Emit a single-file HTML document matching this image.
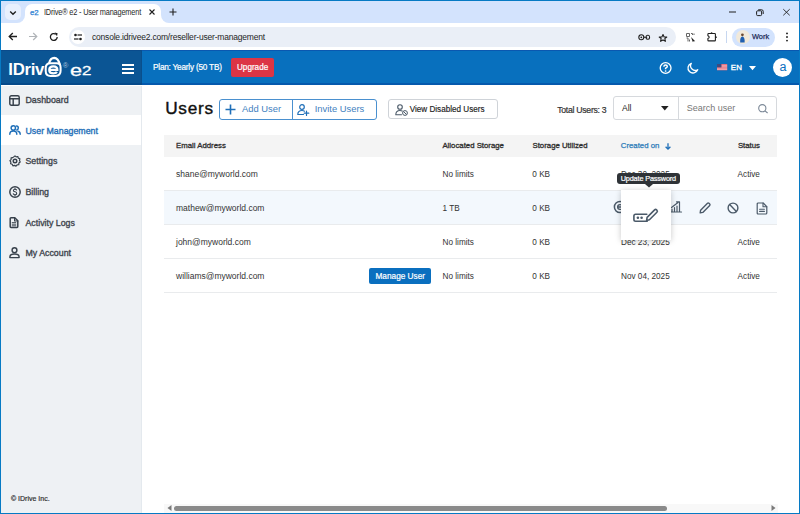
<!DOCTYPE html>
<html><head><meta charset="utf-8">
<style>
*{box-sizing:border-box;margin:0;padding:0}
html,body{width:800px;height:514px;overflow:hidden;background:#fff;font-family:"Liberation Sans",sans-serif}
.a{position:absolute;white-space:nowrap;line-height:1}
svg.a{overflow:visible}
#win{position:absolute;left:0;top:0;width:800px;height:514px;overflow:hidden;background:#fff}
#bd{position:absolute;left:0;top:0;width:800px;height:514px;border:1px solid #067ac4;pointer-events:none;z-index:50}
.nt{font-size:8.8px;color:#3f464e;-webkit-text-stroke:0.35px #3f464e}
.th{font-size:7.8px;color:#2e2e2e;-webkit-text-stroke:0.3px #2e2e2e}
.td{font-size:8.2px;color:#333}
.em{font-size:8.5px;color:#333}
.ic{stroke:#4b5a69;fill:none;stroke-width:1.4;stroke-linecap:round;stroke-linejoin:round}
.si{stroke:#37414b;fill:none;stroke-width:1.45;stroke-linecap:round;stroke-linejoin:round}
</style></head><body>
<div id="win">
 <!-- tab strip -->
 <div class="a" style="left:0;top:0;width:800px;height:23.3px;background:#d3e3fd"></div>
 <div class="a" style="left:25px;top:4px;width:136px;height:19px;background:#fff;border-radius:7px 7px 0 0"></div>
 <div class="a" style="left:161px;top:15px;width:8px;height:8px;background:#fff"></div>
 <div class="a" style="left:161px;top:11px;width:12px;height:12px;background:#d3e3fd;border-radius:0 0 0 8px"></div>
 <div class="a" style="left:17px;top:15px;width:8px;height:8px;background:#fff"></div>
 <div class="a" style="left:13px;top:11px;width:12px;height:12px;background:#d3e3fd;border-radius:0 0 8px 0"></div>
 <div class="a" style="left:5px;top:4px;width:16px;height:16px;border-radius:5px;background:#e9f0fd"></div>
 <svg class="a" style="left:9px;top:9.5px" width="8" height="6" viewBox="0 0 8 6"><path d="M1.2 1.5 L4 4.2 L6.8 1.5" stroke="#1f1f1f" stroke-width="1.4" fill="none"/></svg>
 <div class="a" style="left:30px;top:9.3px;font-size:7.8px;color:#2a7ed2;letter-spacing:-0.2px;-webkit-text-stroke:0.25px #2a7ed2">e2</div>
 <div class="a" style="left:43.5px;top:7.9px;font-size:8.6px;color:#1f1f1f;letter-spacing:-0.2px;transform:scaleX(0.855);transform-origin:0 0">IDrive<span style="font-size:8.6px">®</span>&nbsp;e2 - User management</div>
 <svg class="a" style="left:148.5px;top:9px" width="6" height="6" viewBox="0 0 6 6"><path d="M0.5 0.5L5.5 5.5M5.5 0.5L0.5 5.5" stroke="#1f1f1f" stroke-width="1.1"/></svg>
 <svg class="a" style="left:169px;top:8px" width="8" height="8" viewBox="0 0 8 8"><path d="M4 0.5V7.5M0.5 4H7.5" stroke="#1f1f1f" stroke-width="1.1"/></svg>
 <svg class="a" style="left:729px;top:11px" width="7" height="2" viewBox="0 0 7 2"><path d="M0 1H7" stroke="#1f1f1f" stroke-width="1"/></svg>
 <svg class="a" style="left:755.5px;top:8.5px" width="8" height="7" viewBox="0 0 8 7"><rect x="0.6" y="1.8" width="5" height="4.8" rx="1" stroke="#1f1f1f" stroke-width="1" fill="none"/><path d="M2.2 0.8H5.6Q7.2 0.8 7.2 2.4V5" stroke="#1f1f1f" stroke-width="1" fill="none"/></svg>
 <svg class="a" style="left:783px;top:9px" width="7" height="6.5" viewBox="0 0 7 6.5"><path d="M0.3 0.2L6.7 6.3M6.7 0.2L0.3 6.3" stroke="#1f1f1f" stroke-width="0.9"/></svg>

 <!-- toolbar -->
 <svg class="a" style="left:8px;top:32px" width="10" height="9" viewBox="0 0 10 9"><path d="M9 4.5H1.5M4.8 1L1.2 4.5L4.8 8" stroke="#1f1f1f" stroke-width="1.3" fill="none"/></svg>
 <svg class="a" style="left:28px;top:32px" width="10" height="9" viewBox="0 0 10 9"><path d="M1 4.5H8.5M5.2 1L8.8 4.5L5.2 8" stroke="#b0b4b8" stroke-width="1.2" fill="none"/></svg>
 <svg class="a" style="left:49px;top:32px" width="10" height="10" viewBox="0 0 10 10"><path d="M8.2 5A3.4 3.4 0 1 1 6.8 2.2" stroke="#1f1f1f" stroke-width="1.3" fill="none"/><path d="M5.6 0.6L8.6 1.2L8 4.2Z" fill="#1f1f1f"/></svg>
 <div class="a" style="left:69px;top:27.3px;width:607px;height:19.6px;background:#eaeff7;border-radius:10px"></div>
 <div class="a" style="left:71px;top:30px;width:14px;height:14px;background:#fff;border-radius:7px"></div>
 <svg class="a" style="left:73px;top:32px" width="10" height="10" viewBox="0 0 10 10"><circle cx="2.5" cy="3" r="1.3" fill="#1f1f1f"/><path d="M4.5 3H9" stroke="#1f1f1f" stroke-width="1.2"/><circle cx="7.5" cy="7" r="1.3" fill="#1f1f1f"/><path d="M1 7H5.5" stroke="#1f1f1f" stroke-width="1.2"/></svg>
 <div class="a" style="left:92px;top:32.8px;font-size:8.5px;color:#1f1f1f;letter-spacing:-0.2px">console.idrivee2.com/reseller-user-management</div>
 <svg class="a" style="left:638px;top:34px" width="13" height="7" viewBox="0 0 13 7"><circle cx="3.3" cy="3.3" r="2.5" stroke="#1f1f1f" stroke-width="1.1" fill="none"/><circle cx="3.3" cy="3.3" r="0.9" fill="#1f1f1f"/><path d="M5.8 3.3H9.2M9.5 1.3H10.2Q11.6 1.3 11.6 3.3Q11.6 5.3 10.2 5.3H9.5Q8 5.3 8 3.3Q8 1.3 9.5 1.3Z" stroke="#1f1f1f" stroke-width="1.1" fill="none"/></svg>
 <svg class="a" style="left:657.5px;top:33.5px" width="10" height="8" viewBox="0 0 10 8"><path d="M5 0.6L6.1 2.9L8.8 3L6.8 4.7L7.5 7.3L5 5.9L2.5 7.3L3.2 4.7L1.2 3L3.9 2.9Z" stroke="#1f1f1f" stroke-width="1.1" fill="none" stroke-linejoin="round"/></svg>
 <svg class="a" style="left:686px;top:32.5px" width="10" height="9" viewBox="0 0 10 9"><path d="M0.5 0.5H3.5V3.5H0.5Z M5 0.5H6.5V2 M8 0.5V2 M0.5 5H2V8.5 M3.5 6.5V8.5" stroke="#666" stroke-width="1" fill="none"/><path d="M5 4L9.2 8.2L7.6 8.3L6.8 9Z" fill="#1f1f1f"/></svg>
 <svg class="a" style="left:706.5px;top:32px" width="11" height="10" viewBox="0 0 11 10"><path d="M1.6 1.5H7.7Q8.4 1.5 8.4 2.2V8.2Q8.4 8.9 7.7 8.9H1.6Q0.9 8.9 0.9 8.2V6.6Q2.2 6.1 2.2 5.2Q2.2 4.3 0.9 3.8V2.2Q0.9 1.5 1.6 1.5Z" stroke="#1f1f1f" stroke-width="1.1" fill="none" stroke-linejoin="round"/><circle cx="4.6" cy="1.1" r="0.9" fill="#1f1f1f"/><circle cx="8.9" cy="5.2" r="0.9" fill="#1f1f1f"/></svg>
 <div class="a" style="left:726px;top:31px;width:1px;height:12px;background:#c7d7f0"></div>
 <div class="a" style="left:732px;top:27.5px;width:43px;height:19px;background:#d3e3fd;border-radius:10px"></div>
 <div class="a" style="left:735.5px;top:30px;width:14px;height:14px;background:#f1e9da;border-radius:7px"></div>
 <svg class="a" style="left:739px;top:33px" width="7" height="10" viewBox="0 0 7 10"><circle cx="3.4" cy="1.8" r="1.4" fill="#6b4a33"/><path d="M1.2 9.5Q0.8 4.2 3.4 3.6Q6 4.2 5.6 9.5Z" fill="#1f5fb0"/></svg>
 <div class="a" style="left:752px;top:33.2px;font-size:7.4px;color:#1f2d5a;-webkit-text-stroke:0.25px #1f2d5a">Work</div>
 <svg class="a" style="left:785px;top:32px" width="4" height="10" viewBox="0 0 4 10"><circle cx="2" cy="1.4" r="0.95" fill="#1f1f1f"/><circle cx="2" cy="5" r="0.95" fill="#1f1f1f"/><circle cx="2" cy="8.6" r="0.95" fill="#1f1f1f"/></svg>

 <!-- header -->
 <div class="a" style="left:0;top:50px;width:800px;height:34.6px;background:#0870be"></div>
 <div class="a" style="left:0;top:50px;width:142px;height:34.6px;background:#0b5594"></div>
 <div class="a" style="left:0;top:50px;width:800px;height:1px;background:#0a58b0"></div>
 <div class="a" style="left:0;top:50px;width:142px;height:1px;background:#0a4b8c"></div>
 <div class="a" style="left:141px;top:50px;width:1px;height:34px;background:#0a4f8c"></div>
 <div class="a" style="left:0;top:83.4px;width:800px;height:1.3px;background:#0559ad"></div>
 <div class="a" style="left:0;top:83.4px;width:142px;height:1.3px;background:#064a8a"></div>
 <div class="a" style="left:8.3px;top:62.2px;font-size:16.8px;font-weight:bold;color:#fff;letter-spacing:-0.3px">IDriv</div>
 <svg class="a" style="left:44px;top:56px" width="18" height="21" viewBox="0 0 18 21"><path d="M5 7.4Q6.4 1.9 10.2 1.9Q14.2 2.1 15.9 8.6" stroke="#fff" stroke-width="2.1" fill="none" stroke-linecap="round"/><path d="M6.5 7.3H12.6Q16.6 7.3 16.6 11.5V14.8Q16.6 19.9 11.6 19.9H6.6Q1.7 19.9 1.7 15V12.2Q1.7 7.3 6.5 7.3Z" stroke="#fff" stroke-width="2" fill="#0b5594"/><path d="M5.3 13.8H13.3Q13.3 10.4 9.3 10.4Q5.3 10.4 5.3 13.9Q5.3 17.3 9.4 17.3Q12 17.3 12.9 15.9" stroke="#fff" stroke-width="2.3" fill="none"/></svg>
 <div class="a" style="left:62.8px;top:62.3px;font-size:7.5px;color:#a9c2dc">®</div>
 <div class="a" style="left:70.4px;top:62.4px;font-size:16.4px;color:#fff;transform:scaleX(1.32);transform-origin:0 0;-webkit-text-stroke:0.3px #fff">e</div>
 <div class="a" style="left:82.2px;top:64.3px;font-size:13px;color:#fff;transform:scaleX(1.3);transform-origin:0 0;-webkit-text-stroke:0.3px #fff">2</div>
 <div class="a" style="left:122px;top:64px;width:12px;height:2px;background:#fff"></div>
 <div class="a" style="left:122px;top:68px;width:12px;height:2px;background:#fff"></div>
 <div class="a" style="left:122px;top:72px;width:12px;height:2px;background:#fff"></div>
 <div class="a" style="left:153px;top:63.7px;font-size:8.2px;color:#fff;letter-spacing:-0.2px;-webkit-text-stroke:0.2px #fff">Plan: Yearly (50 TB)</div>
 <div class="a" style="left:230.5px;top:58px;width:43.5px;height:18.5px;background:#dc3545;border-radius:2px"></div>
 <div class="a" style="left:237px;top:63.7px;font-size:8.15px;color:#fff;-webkit-text-stroke:0.2px #fff">Upgrade</div>
 <svg class="a" style="left:659px;top:62px" width="14" height="14" viewBox="0 0 14 14"><circle cx="6.6" cy="6" r="5.4" stroke="#fff" stroke-width="1.3" fill="none"/><path d="M4.9 4.7Q4.9 3 6.6 3Q8.3 3 8.3 4.5Q8.3 5.5 6.6 6.2V7.2" stroke="#fff" stroke-width="1.5" fill="none"/><circle cx="6.6" cy="9" r="0.85" fill="#fff"/></svg>
 <svg class="a" style="left:686.7px;top:62px" width="13" height="13" viewBox="0 0 13 13"><path d="M4.29 1.3A5 5 0 1 0 10.7 7.71A4.67 4.67 0 0 1 4.29 1.3Z" stroke="#fff" stroke-width="1.3" fill="none" stroke-linejoin="round"/></svg>
 <svg class="a" style="left:716.8px;top:64.3px" width="10.2" height="6.3" viewBox="0 0 10.2 6.3"><rect width="10.2" height="6.3" fill="#e46a78"/><path d="M4.4 1.35H10.2M4.4 2.75H10.2M0 4.15H10.2M0 5.55H10.2" stroke="#f3c9cf" stroke-width="0.6"/><rect width="4.4" height="3.4" fill="#3e4a80"/></svg>
 <div class="a" style="left:730.8px;top:64.2px;font-size:7.9px;color:#fff;-webkit-text-stroke:0.35px #fff;letter-spacing:0.2px">EN</div>
 <svg class="a" style="left:749px;top:65.8px" width="7" height="5" viewBox="0 0 7 5"><path d="M0 0H7L3.5 4.3Z" fill="#fff"/></svg>
 <div class="a" style="left:773px;top:58px;width:19px;height:19px;background:#fff;border-radius:50%"></div>
 <div class="a" style="left:779.5px;top:60.5px;font-size:12.5px;color:#0a6fbf">a</div>

 <!-- sidebar -->
 <div class="a" style="left:0;top:86px;width:142px;height:430px;background:#eef1f4"></div>
 
 <div class="a" style="left:0;top:115px;width:141px;height:30.3px;background:#fff"></div>
 <div class="a" style="left:141px;top:86px;width:1px;height:430px;background:#e4e9ee"></div>
 <svg class="a" style="left:9px;top:94.5px" width="11" height="11" viewBox="0 0 11 11"><rect x="0.8" y="0.8" width="9.4" height="9.4" rx="1.5" class="si"/><path d="M0.8 3.8H10.2M4.2 3.8V10.2" class="si"/></svg>
 <div class="a nt" style="left:25.5px;top:96.2px">Dashboard</div>
 <svg class="a" style="left:9px;top:125.3px" width="12" height="10" viewBox="0 0 12 10"><circle cx="4.3" cy="3" r="2.2" class="si" style="stroke:#1f6fb8"/><path d="M0.8 9.2Q0.8 6 4.3 6Q7.8 6 7.8 9.2" class="si" style="stroke:#1f6fb8"/><path d="M7.4 1Q9.3 1 9.3 3Q9.3 4.6 7.8 5M9 6.3Q11.2 6.8 11.2 9.2" class="si" style="stroke:#1f6fb8"/></svg>
 <div class="a nt" style="left:25.5px;top:127.0px;color:#1f6fb8;-webkit-text-stroke:0.35px #1f6fb8">User Management</div>
 <svg class="a" style="left:9px;top:155px" width="12" height="12" viewBox="0 0 12 12"><path d="M6 0.9L7.2 1.9L8.8 1.5L9.3 3.1L10.9 3.8L10.5 5.4L11.2 6.9L9.9 7.9L9.8 9.6L8.1 9.8L7 11.1L5.5 10.4L3.9 10.8L3.2 9.3L1.6 8.7L1.9 7.1L0.9 5.7L2.1 4.6L2.1 2.9L3.8 2.6Z" class="si" style="stroke-width:1.2"/><circle cx="6" cy="6" r="1.8" class="si"/></svg>
 <div class="a nt" style="left:25.5px;top:157.1px">Settings</div>
 <svg class="a" style="left:9px;top:186px" width="12" height="12" viewBox="0 0 12 12"><circle cx="6" cy="6" r="5.2" class="si"/><path d="M7.6 4Q7.2 3.2 6 3.2Q4.4 3.2 4.4 4.4Q4.4 5.5 6 5.8Q7.7 6.1 7.7 7.4Q7.7 8.7 6 8.7Q4.7 8.7 4.3 7.8M6 2.3V3.2M6 8.7V9.7" class="si" style="stroke-width:1.1"/></svg>
 <div class="a nt" style="left:25.5px;top:187.9px">Billing</div>
 <svg class="a" style="left:9px;top:217px" width="10" height="11" viewBox="0 0 10 11"><path d="M1.2 1.6Q1.2 0.8 2 0.8H5.8L8.8 3.8V9.6Q8.8 10.4 8 10.4H2Q1.2 10.4 1.2 9.6Z" class="si" style="stroke-width:1.5"/><path d="M5.6 0.8V4H8.8" class="si" style="stroke-width:1.2"/><path d="M3.2 5.6H6.8M3.2 7.2H6.8M3.2 8.8H6.8" class="si" style="stroke-width:0.9"/></svg>
 <div class="a nt" style="left:25.5px;top:218.5px">Activity Logs</div>
 <svg class="a" style="left:9px;top:246.5px" width="12" height="12" viewBox="0 0 12 12"><circle cx="5.5" cy="3.2" r="2.4" class="si"/><path d="M0.9 10.6V9.9Q0.9 6.9 5.5 6.9Q10.1 6.9 10.1 9.9V10.6Z" class="si"/></svg>
 <div class="a nt" style="left:25.5px;top:248.8px">My Account</div>
 <div class="a" style="left:11px;top:494.6px;font-size:7px;color:#333;-webkit-text-stroke:0.2px #333">© IDrive Inc.</div>

 <!-- content -->
 <div class="a" style="left:165.2px;top:99.8px;font-size:17.2px;color:#111;letter-spacing:0.75px;-webkit-text-stroke:0.4px #111">Users</div>
 <div class="a" style="left:219px;top:99px;width:158px;height:20.5px;border:1px solid #4a90cf;border-radius:3px"></div>
 <div class="a" style="left:291.5px;top:99px;width:1px;height:20.5px;background:#4a90cf"></div>
 <svg class="a" style="left:225px;top:104px" width="11" height="11" viewBox="0 0 11 11"><path d="M5.5 0.5V10.5M0.5 5.5H10.5" stroke="#1f6fb8" stroke-width="1.6"/></svg>
 <div class="a" style="left:242px;top:103.8px;font-size:9.4px;color:#3f7fc0">Add User</div>
 <svg class="a" style="left:297px;top:104px" width="13" height="12" viewBox="0 0 13 12"><circle cx="5" cy="3" r="2.3" stroke="#1f6fb8" stroke-width="1.2" fill="none"/><path d="M0.8 10.5Q0.8 6.5 5 6.5Q6.5 6.5 7.5 7.2M0.8 10.5H6.5M9.5 7V11.5M7.2 9.2H11.8" stroke="#1f6fb8" stroke-width="1.2" fill="none" stroke-linecap="round"/></svg>
 <div class="a" style="left:314.75px;top:103.8px;font-size:9.4px;color:#3f7fc0">Invite Users</div>

 <div class="a" style="left:388px;top:99px;width:109.5px;height:19.5px;border:1px solid #cfd3d8;border-radius:3px"></div>
 <svg class="a" style="left:394.5px;top:103.5px" width="14" height="12" viewBox="0 0 14 12"><circle cx="5" cy="3" r="2.3" stroke="#4b5a69" stroke-width="1.1" fill="none"/><path d="M0.8 10.8Q0.8 6.5 5 6.5Q6.3 6.5 7.2 7M0.8 10.8H6.5" stroke="#4b5a69" stroke-width="1.1" fill="none" stroke-linecap="round"/><circle cx="10" cy="9" r="2.4" stroke="#4b5a69" stroke-width="1" fill="none"/><path d="M8.5 7.5L11.5 10.5" stroke="#4b5a69" stroke-width="1"/></svg>
 <div class="a" style="left:409.7px;top:105.9px;font-size:8.15px;color:#222;-webkit-text-stroke:0.15px #222">View Disabled Users</div>

 <div class="a" style="left:557.2px;top:106px;font-size:8.7px;color:#333;letter-spacing:-0.28px;-webkit-text-stroke:0.2px #333">Total Users: 3</div>
 <div class="a" style="left:612.5px;top:96px;width:164px;height:23.5px;border:1px solid #d6d9dd;border-radius:3px"></div>
 <div class="a" style="left:677.5px;top:96px;width:1px;height:23.5px;background:#d6d9dd"></div>
 <div class="a" style="left:622px;top:103.6px;font-size:8.5px;color:#222">All</div>
 <svg class="a" style="left:661px;top:106px" width="8" height="5" viewBox="0 0 8 5"><path d="M0 0H7.6L3.8 4.4Z" fill="#222"/></svg>
 <div class="a" style="left:686.7px;top:103.5px;font-size:9px;color:#777">Search user</div>
 <svg class="a" style="left:757.5px;top:103.6px" width="11" height="10" viewBox="0 0 11 10"><circle cx="4.3" cy="4.2" r="3.6" stroke="#7a8796" stroke-width="1.1" fill="none"/><path d="M7 6.8L9.6 9" stroke="#7a8796" stroke-width="1.1"/></svg>

 <div class="a" style="left:164px;top:134.5px;width:613px;height:22px;background:#f4f4f4"></div>
 <div class="a th" style="left:176px;top:141.8px">Email Address</div>
 <div class="a th" style="left:442.4px;top:141.8px">Allocated Storage</div>
 <div class="a th" style="left:532.5px;top:141.8px">Storage Utilized</div>
 <div class="a th" style="left:620.8px;top:141.8px;color:#2a7ab8;-webkit-text-stroke:0.25px #2a7ab8">Created on</div>
 <svg class="a" style="left:664.5px;top:142.5px" width="6" height="7" viewBox="0 0 6 7"><path d="M3 0.3V6.2M0.6 3.8L3 6.2L5.4 3.8" stroke="#1f6fb8" stroke-width="1.3" fill="none"/></svg>
 <div class="a th" style="left:737.9px;top:141.8px">Status</div>

 <div class="a" style="left:164px;top:189.5px;width:613px;height:1px;background:#e9ebed"></div>
 <div class="a" style="left:164px;top:190.5px;width:613px;height:33.5px;background:#f3f8fd"></div>
 <div class="a" style="left:164px;top:224px;width:613px;height:1px;background:#e9ebed"></div>
 <div class="a" style="left:164px;top:258px;width:613px;height:1px;background:#e9ebed"></div>
 <div class="a" style="left:164px;top:292px;width:613px;height:1px;background:#e9ebed"></div>

 <div class="a em" style="left:176px;top:169.9px">shane@myworld.com</div>
 <div class="a td" style="left:442.5px;top:170.9px">No limits</div>
 <div class="a td" style="left:532.3px;top:170.9px">0 KB</div>
 <div class="a td" style="left:621px;top:170.9px">Dec 30, 2025</div>
 <div class="a td" style="left:737.6px;top:170.9px">Active</div>

 <div class="a em" style="left:176px;top:204px">mathew@myworld.com</div>
 <div class="a td" style="left:442.5px;top:205.0px">1 TB</div>
 <div class="a td" style="left:532.3px;top:205.0px">0 KB</div>
 <svg class="a" style="left:613px;top:200px" width="14" height="14" viewBox="0 0 14 14"><circle cx="7" cy="7" r="5.6" class="ic" style="stroke-width:1.5"/><path d="M4.6 7H9.4Q9.4 4.6 7 4.6Q4.6 4.6 4.6 7Q4.6 9.4 7 9.4H9" class="ic" style="stroke-width:1.3"/></svg>
 <svg class="a" style="left:670px;top:200px" width="12" height="13" viewBox="0 0 12 13"><path d="M1 12H11.5M2 11.5V9M4.5 11.5V7.5M7 11.5V6M9.5 11.5V4.5M1.5 7.5L8 2.5M6.5 1.8H9.5V4.5" class="ic" style="stroke-width:1.2"/></svg>
 <svg class="a" style="left:698px;top:202px" width="14" height="13" viewBox="0 0 14 13"><path d="M2.2 10.8L2.6 8.2L9.5 1.3Q10.2 0.6 11 1.3L11.7 2Q12.4 2.8 11.7 3.5L4.8 10.4Z" class="ic"/></svg>
 <svg class="a" style="left:727px;top:201.5px" width="12" height="12" viewBox="0 0 12 12"><circle cx="6" cy="6" r="4.9" class="ic"/><path d="M2.6 2.6L9.4 9.4" class="ic"/></svg>
 <svg class="a" style="left:756px;top:201.5px" width="12" height="13" viewBox="0 0 12 13"><path d="M1.2 2Q1.2 1 2.2 1H7.2L10.8 4.6V11Q10.8 12 9.8 12H2.2Q1.2 12 1.2 11Z" class="ic" style="stroke-width:1.2"/><path d="M7 1V4.8H10.8M3.6 7.2H8.4M3.6 9.4H8.4" class="ic" style="stroke-width:1.1"/></svg>

 <div class="a em" style="left:176px;top:238px">john@myworld.com</div>
 <div class="a td" style="left:442.5px;top:239.0px">No limits</div>
 <div class="a td" style="left:532.3px;top:239.0px">0 KB</div>
 <div class="a td" style="left:621px;top:239.0px">Dec 23, 2025</div>
 <div class="a td" style="left:737.6px;top:239.0px">Active</div>

 <div class="a em" style="left:176px;top:272px">williams@myworld.com</div>
 <div class="a" style="left:369px;top:267.8px;width:62px;height:16px;background:#0a6fbf;border-radius:2px"></div>
 <div class="a" style="left:375.5px;top:272.7px;font-size:8.25px;color:#fff;-webkit-text-stroke:0.2px #fff">Manage User</div>
 <div class="a td" style="left:442.5px;top:273.0px">No limits</div>
 <div class="a td" style="left:532.3px;top:273.0px">0 KB</div>
 <div class="a td" style="left:621px;top:273.0px">Nov 04, 2025</div>
 <div class="a td" style="left:737.6px;top:273.0px">Active</div>

 <!-- popup -->
 <div class="a" style="left:620.7px;top:189.5px;width:50.7px;height:50px;background:#fff;box-shadow:0 1px 6px rgba(0,0,0,0.22)"></div>
 <svg class="a" style="left:632px;top:205px" width="28" height="18" viewBox="0 0 28 18"><path d="M15.2 16.2H3.6Q1.9 16.2 1.9 14.5V10.9Q1.9 9.2 3.6 9.2H14.8" stroke="#4b5a69" stroke-width="1.6" fill="none" stroke-linecap="round"/><circle cx="5.9" cy="12.7" r="1.3" fill="#4b5a69"/><circle cx="9.6" cy="12.7" r="1.3" fill="#4b5a69"/><path d="M14.6 15.6L15.1 12.4L22.6 4.9Q23.6 3.9 24.6 4.9L24.9 5.2Q25.9 6.2 24.9 7.2L17.4 14.7Z" stroke="#4b5a69" stroke-width="1.6" fill="none" stroke-linejoin="round"/></svg>
 <div class="a" style="left:617px;top:172.8px;width:63px;height:11.6px;background:#2f3337;border-radius:3px"></div>
 <svg class="a" style="left:645px;top:184.4px" width="8" height="3.5" viewBox="0 0 8 3.5"><path d="M0 0H8L4 3.5Z" fill="#2f3337"/></svg>
 <div class="a" style="left:620.7px;top:175.3px;font-size:7.3px;color:#fff;letter-spacing:-0.15px;-webkit-text-stroke:0.2px #fff">Update Password</div>

 <!-- scrollbar -->
 <div class="a" style="left:164px;top:503.5px;width:614px;height:9px;background:#f8f8f8"></div>
 <svg class="a" style="left:166.5px;top:505px" width="5" height="6" viewBox="0 0 5 6"><path d="M4.5 0V6L0.5 3Z" fill="#7a7a7a"/></svg>
 <div class="a" style="left:174.4px;top:505.6px;width:492.2px;height:5px;background:#8a8a8a;border-radius:3px"></div>
 <svg class="a" style="left:770.5px;top:505px" width="5" height="6" viewBox="0 0 5 6"><path d="M0.5 0V6L4.5 3Z" fill="#7a7a7a"/></svg>
</div>
<div id="bd"></div>
</body></html>
